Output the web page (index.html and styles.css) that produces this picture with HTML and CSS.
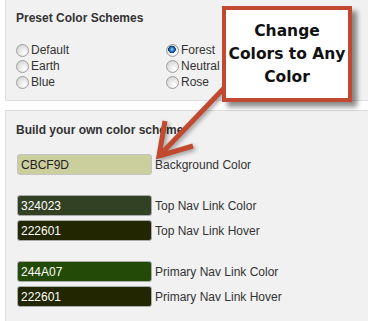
FILE: index.html
```html
<!DOCTYPE html>
<html>
<head>
<meta charset="utf-8">
<link rel="stylesheet" href="styles.css">
</head>
<body>
<div class="page">
  <section class="panel panel-preset">
    <h2 class="panel-title">Preset Color Schemes</h2>
    <div class="scheme-grid">
      <label class="scheme"><input type="radio" name="scheme" class="radio">Default</label>
      <label class="scheme"><input type="radio" name="scheme" class="radio" checked>Forest</label>
      <label class="scheme"><input type="radio" name="scheme" class="radio">Earth</label>
      <label class="scheme"><input type="radio" name="scheme" class="radio">Neutral</label>
      <label class="scheme"><input type="radio" name="scheme" class="radio">Blue</label>
      <label class="scheme"><input type="radio" name="scheme" class="radio">Rose</label>
    </div>
  </section>

  <section class="panel panel-custom">
    <h2 class="panel-title">Build your own color scheme</h2>
    <div class="field-group">
      <div class="field"><input class="swatch swatch-light" style="background:#CBCF9D" value="CBCF9D"><span class="field-label">Background Color</span></div>
    </div>
    <div class="field-group">
      <div class="field"><input class="swatch" style="background:#324023" value="324023"><span class="field-label">Top Nav Link Color</span></div>
      <div class="field"><input class="swatch" style="background:#222601" value="222601"><span class="field-label">Top Nav Link Hover</span></div>
    </div>
    <div class="field-group">
      <div class="field"><input class="swatch" style="background:#244A07" value="244A07"><span class="field-label">Primary Nav Link Color</span></div>
      <div class="field"><input class="swatch" style="background:#222601" value="222601"><span class="field-label">Primary Nav Link Hover</span></div>
    </div>
  </section>

  <svg class="arrow" width="368" height="321" viewBox="0 0 368 321">
    <g fill="none" stroke="#c1492f" stroke-width="5" stroke-linejoin="miter">
      <path d="M228 84 L160 155"/>
      <path d="M165 121 L159 156 L193 146"/>
    </g>
  </svg>

  <div class="callout">Change<br>Colors to Any<br>Color</div>
</div>
</body>
</html>
```

FILE: styles.css
```css
html, body {
  margin: 0;
  padding: 0;
  overflow: hidden;
  background: #ffffff;
}

.page {
  position: relative;
  width: 368px;
  height: 321px;
  padding-left: 5px;
  box-sizing: border-box;
  font-family: "Liberation Sans", Arial, sans-serif;
  font-size: 12px;
  color: #333333;
}

.panel {
  background: #f1f1f1;
  border: 1px solid #dddddd;
  border-right: none;
  padding: 0 10px;
}

.panel-preset {
  border-top: none;
  padding-top: 11px;
  padding-bottom: 10px;
}

.panel-custom {
  margin-top: 9px;
  padding-top: 12px;
  padding-bottom: 14px;
  border-bottom: none;
}

.panel-title {
  margin: 0 0 16px;
  font-size: 12px;
  line-height: 15px;
  font-weight: bold;
  color: #333333;
}

.scheme-grid {
  display: grid;
  grid-template-columns: 150px 150px;
  grid-auto-rows: 16px;
}

.scheme {
  display: flex;
  align-items: center;
  height: 16px;
  line-height: 16px;
}

.radio {
  appearance: none;
  -webkit-appearance: none;
  width: 13px;
  height: 13px;
  margin: 0 2px 0 0;
  border-radius: 50%;
  border: 1px solid #9d9d9d;
  box-sizing: border-box;
  background: radial-gradient(circle at 65% 70%, #ffffff 0%, #ededed 35%, #cfcfcf 90%);
  flex: none;
}

.radio:checked {
  background:
    radial-gradient(circle at 45% 40%, #bfe4ff 0px, #3a8ad6 1.5px, #144f93 3px, #0b3570 3.6px, rgba(0,0,0,0) 4px),
    radial-gradient(circle at 65% 70%, #ffffff 0%, #ededed 35%, #cfcfcf 90%);
}

.field-group {
  display: flex;
  flex-direction: column;
  gap: 4px;
  margin-bottom: 20px;
  padding-left: 1px;
}

.field-group:last-child {
  margin-bottom: 0;
}

.field {
  display: flex;
  align-items: center;
}

.swatch {
  width: 135px;
  height: 21px;
  box-sizing: border-box;
  border: 1px solid #ababab;
  border-radius: 3px;
  padding: 0 0 0 3px;
  margin: 0;
  font-family: "Liberation Sans", Arial, sans-serif;
  font-size: 12px;
  color: #ffffff;
  outline: none;
}

.swatch-light {
  color: #222222;
  border-color: #c4c4c4;
}

.field-label {
  margin-left: 3px;
}

.arrow {
  position: absolute;
  left: 0;
  top: 0;
  filter: drop-shadow(2px 2px 2px rgba(0, 0, 0, 0.35));
}

.callout {
  position: absolute;
  left: 222px;
  top: 6px;
  width: 130px;
  height: 96px;
  box-sizing: border-box;
  border: 4px solid #c1492f;
  background: #ffffff;
  box-shadow: 5px 5px 5px rgba(0, 0, 0, 0.45);
  padding-top: 10px;
  text-align: center;
  font-family: "DejaVu Sans", Verdana, sans-serif;
  font-weight: bold;
  font-size: 15.5px;
  line-height: 23px;
  color: #111111;
}
```
